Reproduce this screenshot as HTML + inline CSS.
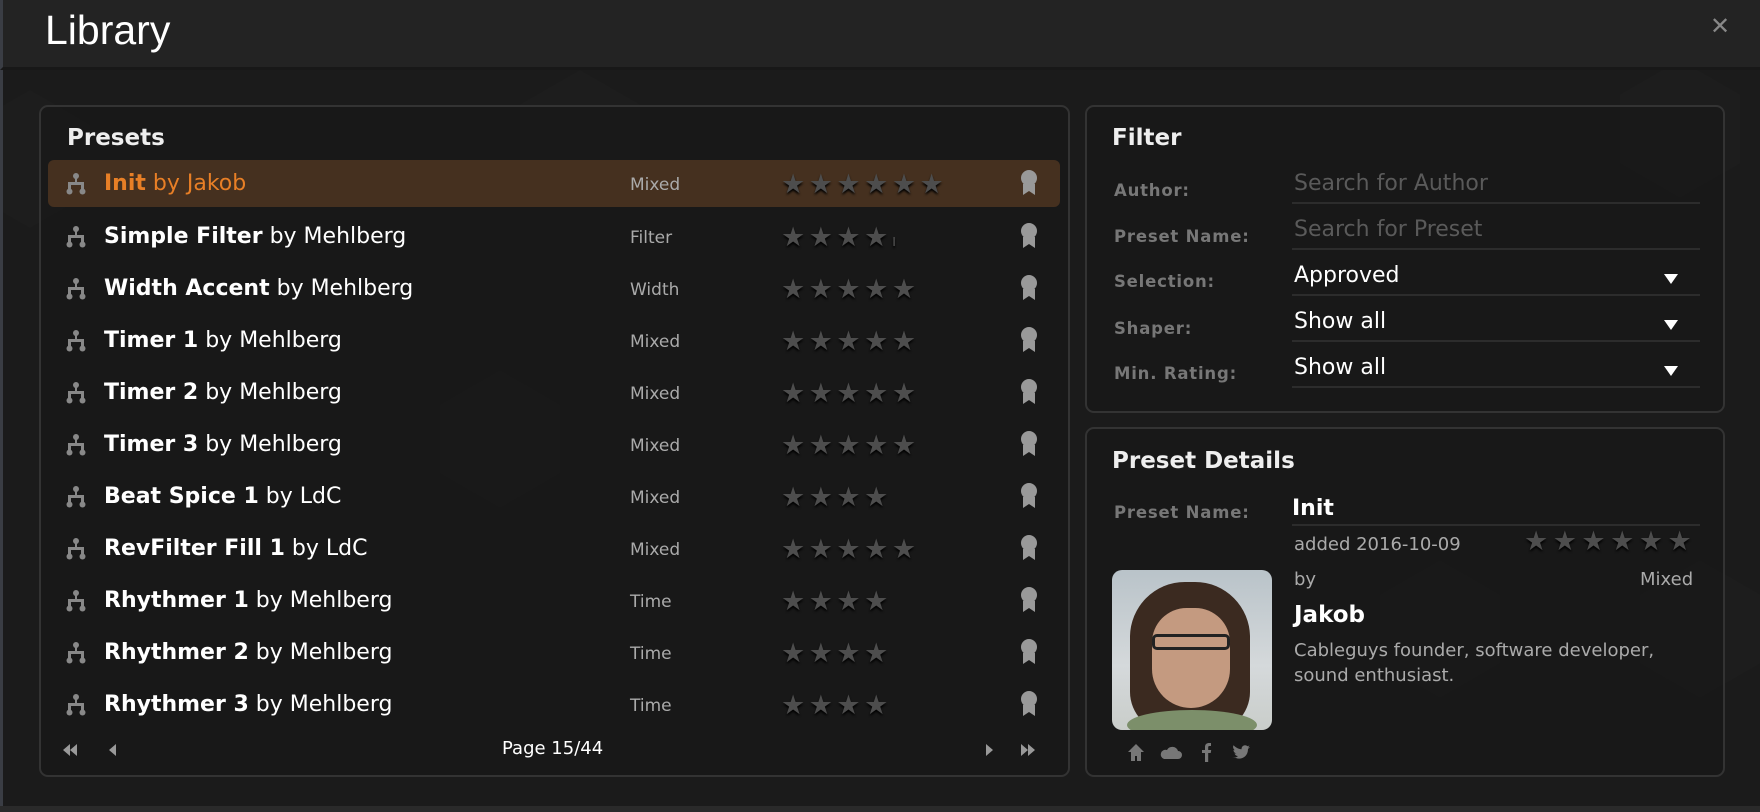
<!DOCTYPE html>
<html><head><meta charset="utf-8"><style>
*{margin:0;padding:0;box-sizing:border-box}
body{width:1760px;height:812px;overflow:hidden;background:#1b1b1b;font-family:"DejaVu Sans","Liberation Sans",sans-serif;color:#fff;position:relative}
.hdr{position:absolute;left:0;top:0;width:1760px;height:70px;background:#232323;border-bottom:3px solid #181818;border-left:3px solid #3a3d44}
.hdr h1{position:absolute;left:42px;top:7px;font-family:"Liberation Sans",sans-serif;font-weight:normal;font-size:41px}
.close{position:absolute;left:1707px;top:12px;font-size:24px;color:#888}
.leftbar{position:absolute;left:0;top:70px;width:3px;height:742px;background:#3a3d44}
.bot{position:absolute;left:0;top:806px;width:1760px;height:6px;background:#2a2a2a}
.panel{position:absolute;border:2px solid #333;border-radius:9px;background:rgba(22,22,22,.55)}
.ttl{position:absolute;font-weight:bold;font-size:23px;color:#eee}
.row{position:absolute;left:48px;width:1012px;height:47px}
.row.sel{background:#45301f;border-radius:6px}
.row .ic{position:absolute;left:17px;top:13px}
.row .nm{position:absolute;left:56px;top:11px;font-size:22px;white-space:nowrap}
.row .nm b{font-weight:bold}
.row .ty{position:absolute;left:582px;top:15px;font-size:17px;color:#aaa}
.row .st{position:absolute;left:733px;top:9px;font-size:27px;color:#4d4d4d;letter-spacing:3.5px;text-shadow:0 2px 2px #000;white-space:nowrap}
.row .md{position:absolute;left:971px;top:10px}
.sel .nm{color:#e87f26}
.lbl{position:absolute;left:1114px;font-size:16.5px;font-weight:bold;color:#777;letter-spacing:.8px}
.inp{position:absolute;left:1292px;width:408px;height:38px;border-bottom:2px solid #2c2c2c;font-size:22px;padding-left:2px;padding-top:5px}
.ph{color:#5a5a5a}
.arr{position:absolute;right:22px;top:16px;width:0;height:0;border-left:7px solid transparent;border-right:7px solid transparent;border-top:10px solid #fff}
.hex{position:absolute;width:120px;height:138px;background:#202020;clip-path:polygon(50% 0,100% 25%,100% 75%,50% 100%,0 75%,0 25%);opacity:.5}
</style></head><body>
<div class="hex" style="left:-30px;top:90px"></div><div class="hex" style="left:520px;top:70px"></div><div class="hex" style="left:440px;top:370px"></div><div class="hex" style="left:1380px;top:560px"></div><div class="hex" style="left:1620px;top:60px"></div><div class="hex" style="left:1640px;top:560px"></div>
<div class="hdr"><h1>Library</h1><div class="close">✕</div></div>
<div class="leftbar"></div>
<div class="panel" style="left:39px;top:105px;width:1031px;height:672px"></div>
<div class="ttl" style="left:67px;top:125px">Presets</div>

<div class="row sel" style="top:160px"><svg class="ic" width="22" height="22" viewBox="0 0 22 22" fill="#888"><circle cx="11" cy="3" r="3"/><rect x="10" y="3" width="2" height="8"/><rect x="4" y="9" width="14" height="3"/><rect x="3" y="9" width="3" height="9"/><rect x="16" y="9" width="3" height="9"/><circle cx="4.5" cy="18.5" r="3"/><circle cx="17.5" cy="18.5" r="3"/></svg><div class="nm"><b>Init</b> by Jakob</div><div class="ty">Mixed</div><div class="st">★★★★★★</div><svg class="md" width="20" height="26" viewBox="0 0 20 26" fill="#999"><circle cx="10" cy="8" r="8"/><path d="M4 14h12v11l-6-4-6 4z"/></svg></div>

<div class="row" style="top:213px"><svg class="ic" width="22" height="22" viewBox="0 0 22 22" fill="#888"><circle cx="11" cy="3" r="3"/><rect x="10" y="3" width="2" height="8"/><rect x="4" y="9" width="14" height="3"/><rect x="3" y="9" width="3" height="9"/><rect x="16" y="9" width="3" height="9"/><circle cx="4.5" cy="18.5" r="3"/><circle cx="17.5" cy="18.5" r="3"/></svg><div class="nm"><b>Simple Filter</b> by Mehlberg</div><div class="ty">Filter</div><div class="st">★★★★<span style="font-size:16px">ı</span></div><svg class="md" width="20" height="26" viewBox="0 0 20 26" fill="#999"><circle cx="10" cy="8" r="8"/><path d="M4 14h12v11l-6-4-6 4z"/></svg></div>

<div class="row" style="top:265px"><svg class="ic" width="22" height="22" viewBox="0 0 22 22" fill="#888"><circle cx="11" cy="3" r="3"/><rect x="10" y="3" width="2" height="8"/><rect x="4" y="9" width="14" height="3"/><rect x="3" y="9" width="3" height="9"/><rect x="16" y="9" width="3" height="9"/><circle cx="4.5" cy="18.5" r="3"/><circle cx="17.5" cy="18.5" r="3"/></svg><div class="nm"><b>Width Accent</b> by Mehlberg</div><div class="ty">Width</div><div class="st">★★★★★</div><svg class="md" width="20" height="26" viewBox="0 0 20 26" fill="#999"><circle cx="10" cy="8" r="8"/><path d="M4 14h12v11l-6-4-6 4z"/></svg></div>

<div class="row" style="top:317px"><svg class="ic" width="22" height="22" viewBox="0 0 22 22" fill="#888"><circle cx="11" cy="3" r="3"/><rect x="10" y="3" width="2" height="8"/><rect x="4" y="9" width="14" height="3"/><rect x="3" y="9" width="3" height="9"/><rect x="16" y="9" width="3" height="9"/><circle cx="4.5" cy="18.5" r="3"/><circle cx="17.5" cy="18.5" r="3"/></svg><div class="nm"><b>Timer 1</b> by Mehlberg</div><div class="ty">Mixed</div><div class="st">★★★★★</div><svg class="md" width="20" height="26" viewBox="0 0 20 26" fill="#999"><circle cx="10" cy="8" r="8"/><path d="M4 14h12v11l-6-4-6 4z"/></svg></div>

<div class="row" style="top:369px"><svg class="ic" width="22" height="22" viewBox="0 0 22 22" fill="#888"><circle cx="11" cy="3" r="3"/><rect x="10" y="3" width="2" height="8"/><rect x="4" y="9" width="14" height="3"/><rect x="3" y="9" width="3" height="9"/><rect x="16" y="9" width="3" height="9"/><circle cx="4.5" cy="18.5" r="3"/><circle cx="17.5" cy="18.5" r="3"/></svg><div class="nm"><b>Timer 2</b> by Mehlberg</div><div class="ty">Mixed</div><div class="st">★★★★★</div><svg class="md" width="20" height="26" viewBox="0 0 20 26" fill="#999"><circle cx="10" cy="8" r="8"/><path d="M4 14h12v11l-6-4-6 4z"/></svg></div>

<div class="row" style="top:421px"><svg class="ic" width="22" height="22" viewBox="0 0 22 22" fill="#888"><circle cx="11" cy="3" r="3"/><rect x="10" y="3" width="2" height="8"/><rect x="4" y="9" width="14" height="3"/><rect x="3" y="9" width="3" height="9"/><rect x="16" y="9" width="3" height="9"/><circle cx="4.5" cy="18.5" r="3"/><circle cx="17.5" cy="18.5" r="3"/></svg><div class="nm"><b>Timer 3</b> by Mehlberg</div><div class="ty">Mixed</div><div class="st">★★★★★</div><svg class="md" width="20" height="26" viewBox="0 0 20 26" fill="#999"><circle cx="10" cy="8" r="8"/><path d="M4 14h12v11l-6-4-6 4z"/></svg></div>

<div class="row" style="top:473px"><svg class="ic" width="22" height="22" viewBox="0 0 22 22" fill="#888"><circle cx="11" cy="3" r="3"/><rect x="10" y="3" width="2" height="8"/><rect x="4" y="9" width="14" height="3"/><rect x="3" y="9" width="3" height="9"/><rect x="16" y="9" width="3" height="9"/><circle cx="4.5" cy="18.5" r="3"/><circle cx="17.5" cy="18.5" r="3"/></svg><div class="nm"><b>Beat Spice 1</b> by LdC</div><div class="ty">Mixed</div><div class="st">★★★★</div><svg class="md" width="20" height="26" viewBox="0 0 20 26" fill="#999"><circle cx="10" cy="8" r="8"/><path d="M4 14h12v11l-6-4-6 4z"/></svg></div>

<div class="row" style="top:525px"><svg class="ic" width="22" height="22" viewBox="0 0 22 22" fill="#888"><circle cx="11" cy="3" r="3"/><rect x="10" y="3" width="2" height="8"/><rect x="4" y="9" width="14" height="3"/><rect x="3" y="9" width="3" height="9"/><rect x="16" y="9" width="3" height="9"/><circle cx="4.5" cy="18.5" r="3"/><circle cx="17.5" cy="18.5" r="3"/></svg><div class="nm"><b>RevFilter Fill 1</b> by LdC</div><div class="ty">Mixed</div><div class="st">★★★★★</div><svg class="md" width="20" height="26" viewBox="0 0 20 26" fill="#999"><circle cx="10" cy="8" r="8"/><path d="M4 14h12v11l-6-4-6 4z"/></svg></div>

<div class="row" style="top:577px"><svg class="ic" width="22" height="22" viewBox="0 0 22 22" fill="#888"><circle cx="11" cy="3" r="3"/><rect x="10" y="3" width="2" height="8"/><rect x="4" y="9" width="14" height="3"/><rect x="3" y="9" width="3" height="9"/><rect x="16" y="9" width="3" height="9"/><circle cx="4.5" cy="18.5" r="3"/><circle cx="17.5" cy="18.5" r="3"/></svg><div class="nm"><b>Rhythmer 1</b> by Mehlberg</div><div class="ty">Time</div><div class="st">★★★★</div><svg class="md" width="20" height="26" viewBox="0 0 20 26" fill="#999"><circle cx="10" cy="8" r="8"/><path d="M4 14h12v11l-6-4-6 4z"/></svg></div>

<div class="row" style="top:629px"><svg class="ic" width="22" height="22" viewBox="0 0 22 22" fill="#888"><circle cx="11" cy="3" r="3"/><rect x="10" y="3" width="2" height="8"/><rect x="4" y="9" width="14" height="3"/><rect x="3" y="9" width="3" height="9"/><rect x="16" y="9" width="3" height="9"/><circle cx="4.5" cy="18.5" r="3"/><circle cx="17.5" cy="18.5" r="3"/></svg><div class="nm"><b>Rhythmer 2</b> by Mehlberg</div><div class="ty">Time</div><div class="st">★★★★</div><svg class="md" width="20" height="26" viewBox="0 0 20 26" fill="#999"><circle cx="10" cy="8" r="8"/><path d="M4 14h12v11l-6-4-6 4z"/></svg></div>

<div class="row" style="top:681px"><svg class="ic" width="22" height="22" viewBox="0 0 22 22" fill="#888"><circle cx="11" cy="3" r="3"/><rect x="10" y="3" width="2" height="8"/><rect x="4" y="9" width="14" height="3"/><rect x="3" y="9" width="3" height="9"/><rect x="16" y="9" width="3" height="9"/><circle cx="4.5" cy="18.5" r="3"/><circle cx="17.5" cy="18.5" r="3"/></svg><div class="nm"><b>Rhythmer 3</b> by Mehlberg</div><div class="ty">Time</div><div class="st">★★★★</div><svg class="md" width="20" height="26" viewBox="0 0 20 26" fill="#999"><circle cx="10" cy="8" r="8"/><path d="M4 14h12v11l-6-4-6 4z"/></svg></div>

<svg style="position:absolute;left:63px;top:743px" width="60" height="14" fill="#999"><path d="M0 7l7-6v12zM7 7l7-6v12z"/><path d="M46 7l7-6v12z"/></svg>
<div style="position:absolute;left:502px;top:738px;font-size:18px;color:#fff">Page 15/44</div>
<svg style="position:absolute;left:986px;top:743px" width="60" height="14" fill="#999"><path d="M0 1l7 6-7 6z"/><path d="M35 1l7 6-7 6zM42 1l7 6-7 6z"/></svg>

<div class="panel" style="left:1085px;top:105px;width:640px;height:308px"></div>
<div class="ttl" style="left:1112px;top:125px">Filter</div>
<div class="lbl" style="top:181px">Author:</div>
<div class="lbl" style="top:227px">Preset Name:</div>
<div class="lbl" style="top:272px">Selection:</div>
<div class="lbl" style="top:319px">Shaper:</div>
<div class="lbl" style="top:364px">Min. Rating:</div>
<div class="inp ph" style="top:166px">Search for Author</div>
<div class="inp ph" style="top:212px">Search for Preset</div>
<div class="inp" style="top:258px">Approved<div class="arr"></div></div>
<div class="inp" style="top:304px">Show all<div class="arr"></div></div>
<div class="inp" style="top:350px">Show all<div class="arr"></div></div>

<div class="panel" style="left:1085px;top:427px;width:640px;height:350px"></div>
<div class="ttl" style="left:1112px;top:448px">Preset Details</div>
<div class="lbl" style="top:503px">Preset Name:</div>
<div style="position:absolute;left:1292px;top:496px;width:408px;height:30px;border-bottom:2px solid #2c2c2c;font-size:22px;font-weight:bold">Init</div>
<div style="position:absolute;left:1294px;top:534px;font-size:18px;color:#aaa">added 2016-10-09</div>
<div style="position:absolute;left:1524px;top:526px;font-size:27px;letter-spacing:4.5px;color:#4d4d4d;text-shadow:0 2px 2px #000;white-space:nowrap">★★★★★★</div>
<div style="position:absolute;left:1294px;top:569px;font-size:18px;color:#aaa">by</div>
<div style="position:absolute;left:1640px;top:569px;font-size:18px;color:#aaa">Mixed</div>
<div style="position:absolute;left:1294px;top:602px;font-size:23px;font-weight:bold">Jakob</div>
<div style="position:absolute;left:1294px;top:638px;font-size:18px;color:#aaa;line-height:25px">Cableguys founder, software developer,<br>sound enthusiast.</div>
<div style="position:absolute;left:1112px;top:570px;width:160px;height:160px;border-radius:10px;overflow:hidden;background:linear-gradient(#b9c3c9,#d5d9db 60%,#c9cdca)">
<div style="position:absolute;left:18px;top:12px;width:120px;height:150px;border-radius:55px 55px 40px 40px;background:#3b2a20"></div>
<div style="position:absolute;left:40px;top:38px;width:78px;height:100px;border-radius:40px 40px 45px 45px;background:#c49a80"></div>
<div style="position:absolute;left:40px;top:64px;width:78px;height:16px;border:3px solid #222;border-radius:5px"></div>
<div style="position:absolute;left:15px;top:140px;width:130px;height:30px;border-radius:50%;background:#7c8f6a"></div>
</div>
<svg style="position:absolute;left:1126px;top:742px" width="140" height="22" fill="#777"><path d="M2 10l8-8 8 8h-3v9h-4v-5h-2v5H5v-9z"/><path d="M38 17h14a4 4 0 0 0 0-8 6 6 0 0 0-11-1 4.5 4.5 0 0 0-3 9z"/><path d="M79 20v-9h-3v-3h3V5c0-3 2-4 4-4h2v3h-1.5c-1 0-1.3.5-1.3 1.3V8h3l-.5 3h-2.5v9z"/><path d="M110 16c5 2 12-1 12-9l2-2-2 .5 1.5-2-2 .8c-2-2-6-1-6 3-3 0-6-2-8-4-1 2 0 4 1.5 5l-1.5-.3c0 2 1.5 3 3 3.5h-2c.5 1.5 2 2.5 3.5 2.5-1.5 1.5-3.5 2-6 2z"/></svg>
<div class="bot"></div>
</body></html>
